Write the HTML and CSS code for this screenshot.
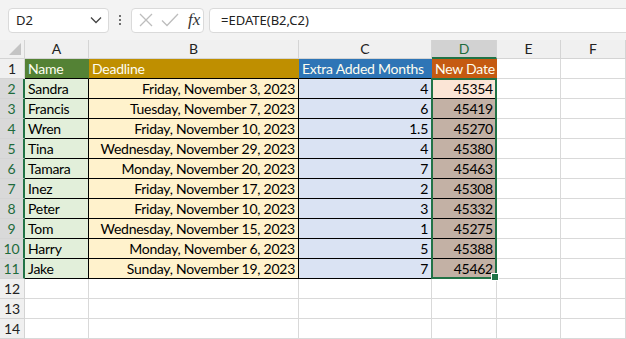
FILE: index.html
```html
<!DOCTYPE html>
<html lang="en">
<head>
    <meta charset="UTF-8">
    <title>EDATE - New Date</title>
    <link rel="stylesheet" href="styles.css">
</head>
<body>
    <div class="formula-bar">
        <div class="name-box">
            <span>D2</span>
            <svg width="12" height="8" viewBox="0 0 12 8"><polyline points="1,1.5 6,6.5 11,1.5" fill="none" stroke="#444" stroke-width="1.3"/></svg>
        </div>
        <div class="dots"><i></i><i></i><i></i></div>
        <div class="fx-box">
            <svg width="16" height="16" viewBox="0 0 16 16"><path d="M2 2 L14 14 M14 2 L2 14" stroke="#bdbdbd" stroke-width="1.3" fill="none"/></svg>
            <svg width="18" height="16" viewBox="0 0 18 16"><polyline points="1,8.5 6,13.5 17,2" stroke="#bdbdbd" stroke-width="1.3" fill="none"/></svg>
            <span class="fx">fx</span>
        </div>
        <div class="formula-input">=EDATE(B2,C2)</div>
    </div>

    <div class="sheet-wrap">
        <div class="sheet" id="sheet">
            <div class="corner"></div>
            <div class="col-head">A</div>
            <div class="col-head">B</div>
            <div class="col-head">C</div>
            <div class="col-head sel">D</div>
            <div class="col-head">E</div>
            <div class="col-head">F</div>
        </div>
        <div class="overlay">
            <div class="selection"><span class="handle"></span></div>
        </div>
    </div>

    <script>
        const rows = [
            ["Sandra", "Friday, November 3, 2023", "4", "45354"],
            ["Francis", "Tuesday, November 7, 2023", "6", "45419"],
            ["Wren", "Friday, November 10, 2023", "1.5", "45270"],
            ["Tina", "Wednesday, November 29, 2023", "4", "45380"],
            ["Tamara", "Monday, November 20, 2023", "7", "45463"],
            ["Inez", "Friday, November 17, 2023", "2", "45308"],
            ["Peter", "Friday, November 10, 2023", "3", "45332"],
            ["Tom", "Wednesday, November 15, 2023", "1", "45275"],
            ["Harry", "Monday, November 6, 2023", "5", "45388"],
            ["Jake", "Sunday, November 19, 2023", "7", "45462"]
        ];

        const sheet = document.getElementById('sheet');

        function cell(cls, text) {
            const div = document.createElement('div');
            div.className = cls;
            div.textContent = text || '';
            sheet.appendChild(div);
        }

        // header row
        cell('row-head', '1');
        cell('cell th-name', 'Name');
        cell('cell th-deadline', 'Deadline');
        cell('cell th-months', 'Extra Added Months');
        cell('cell th-new', 'New Date');
        cell('cell', '');
        cell('cell', '');

        rows.forEach(function(r, i) {
            cell('row-head sel', String(i + 2));
            cell('cell data name', r[0]);
            cell('cell data deadline num', r[1]);
            cell('cell data months num', r[2]);
            cell('cell data newdate num' + (i === 0 ? ' first' : ''), r[3]);
            cell('cell', '');
            cell('cell', '');
        });

        for (let n = 12; n <= 14; n++) {
            cell('row-head', String(n));
            for (let c = 0; c < 6; c++) cell('cell', '');
        }
    </script>
</body>
</html>
```

FILE: styles.css
```css
body {
    margin: 0;
    background: #ffffff;
    font-family: Lato, "Noto Sans", sans-serif;
    overflow: hidden;
}
.formula-bar {
    height: 40px;
    background: #f3f3f3;
    display: flex;
    align-items: center;
    padding-left: 8px;
    box-sizing: border-box;
}
.name-box {
    width: 101px;
    height: 25px;
    box-sizing: border-box;
    background: #fff;
    border: 1px solid #dadada;
    border-radius: 4px;
    display: flex;
    align-items: center;
    justify-content: space-between;
    padding: 0 6px 0 7px;
    font-family: "Noto Sans", sans-serif;
    font-size: 13px;
    color: #222;
}
.dots {
    width: 22px;
    display: flex;
    flex-direction: column;
    align-items: center;
    gap: 2px;
}
.dots i {
    width: 2px;
    height: 2px;
    background: #444;
    border-radius: 1px;
}
.fx-box {
    width: 73px;
    height: 25px;
    box-sizing: border-box;
    background: #fff;
    border: 1px solid #dadada;
    border-radius: 4px;
    display: flex;
    align-items: center;
    gap: 7px;
    padding-left: 6px;
}
.fx {
    font-family: "Liberation Serif", serif;
    font-style: italic;
    font-size: 17px;
    color: #333;
    margin-left: 2px;
}
.formula-input {
    flex: 1;
    margin-left: 5px;
    margin-right: -20px;
    height: 25px;
    box-sizing: border-box;
    background: #fff;
    border: 1px solid #dadada;
    border-radius: 4px;
    padding-left: 11px;
    line-height: 23px;
    font-family: "Noto Sans", sans-serif;
    font-size: 13px;
    color: #222;
}
.sheet-wrap {
    display: grid;
}
.sheet, .overlay {
    grid-area: 1 / 1;
    display: grid;
    grid-template-columns: 25px 64px 210px 133px 65px 64px 65px;
    grid-template-rows: 19px repeat(14, 20px);
}
.sheet {
    font-size: 14px;
    letter-spacing: -0.25px;
}
.overlay {
    pointer-events: none;
}
.sheet > div {
    box-sizing: border-box;
}
.corner {
    background: #f0f0f0;
    border-right: 1px solid #d4d4d4;
    border-bottom: 1px solid #d4d4d4;
    position: relative;
}
.corner::after {
    content: "";
    position: absolute;
    right: 3px;
    bottom: 3px;
    border-left: 12px solid transparent;
    border-bottom: 12px solid #c4c4c4;
}
.col-head {
    background: #f0f0f0;
    border-right: 1px solid #d4d4d4;
    border-bottom: 1px solid #d4d4d4;
    text-align: center;
    line-height: 18px;
    color: #222;
    letter-spacing: 0;
}
.col-head.sel {
    background: #d2d2d2;
    color: #1e6b3c;
    border-bottom: 2px solid #217346;
}
.row-head {
    background: #f0f0f0;
    border-right: 1px solid #d4d4d4;
    border-bottom: 1px solid #d4d4d4;
    text-align: center;
    line-height: 20px;
    color: #222;
    letter-spacing: 0;
}
.row-head.sel {
    background: #d9d9d9;
    color: #1e6b3c;
    border-right: 2px solid #217346;
}
.cell {
    border-right: 1px solid #d9d9d9;
    border-bottom: 1px solid #d9d9d9;
    line-height: 20px;
    padding: 0 3px;
    white-space: nowrap;
    overflow: hidden;
    color: #000;
}
.num {
    text-align: right;
}
.th-name, .th-deadline, .th-months, .th-new {
    color: #fdfdf0;
    border-bottom: 1px solid #000;
}
.th-name { background: #548235; border-right-color: #548235; }
.th-deadline { background: #bf8f00; border-right-color: #bf8f00; }
.th-months { background: #2e75b6; border-right-color: #2e75b6; }
.th-new { background: #c55a11; border-right-color: #c55a11; }
.data {
    border-bottom: 1px solid #000;
    border-right: 1px solid #000;
}
.name { background: #e2efda; }
.deadline { background: #fff2cc; }
.months { background: #dae3f3; }
.newdate { background: #c3b1a5; }
.newdate.first { background: #fbe5d6; }
.selection {
    grid-column: 5;
    grid-row: 3 / 13;
    margin: -1px 0 0 -1px;
    border: 2px solid #217346;
    position: relative;
}
.handle {
    position: absolute;
    right: -4px;
    bottom: -4px;
    width: 6px;
    height: 6px;
    background: #217346;
    border: 1px solid #fff;
}
```
